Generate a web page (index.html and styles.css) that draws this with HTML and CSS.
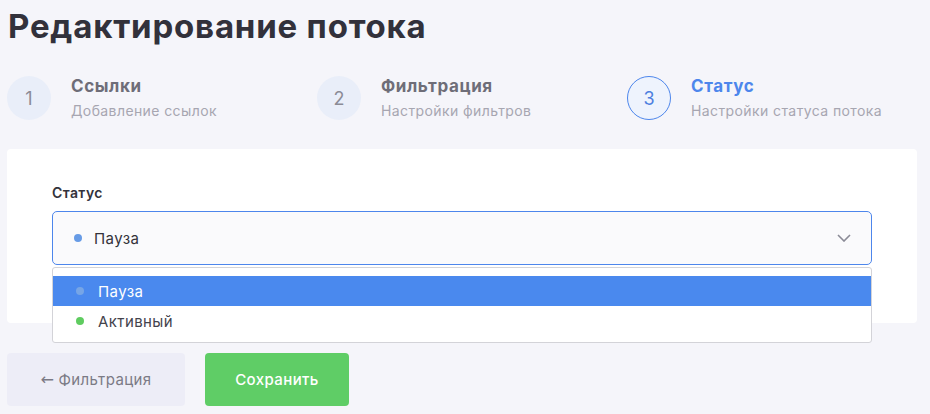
FILE: index.html
```html
<!DOCTYPE html>
<html lang="ru">

<head>
  <meta charset="utf-8">
  <meta name="viewport" content="width=device-width, initial-scale=1.0">
  <title>Редактирование потока</title>
  <link rel="stylesheet" href="styles.css">
</head>

<body>
  <div class="page">
    <h1 class="title">Редактирование потока</h1>

    <ul class="steps">
      <li class="step">
        <span class="num">1</span>
        <div class="step-text">
          <div class="step-name">Ссылки</div>
          <div class="step-desc">Добавление ссылок</div>
        </div>
      </li>
      <li class="step">
        <span class="num">2</span>
        <div class="step-text">
          <div class="step-name">Фильтрация</div>
          <div class="step-desc">Настройки фильтров</div>
        </div>
      </li>
      <li class="step active">
        <span class="num">3</span>
        <div class="step-text">
          <div class="step-name">Статус</div>
          <div class="step-desc">Настройки статуса потока</div>
        </div>
      </li>
    </ul>

    <div class="card">
      <div class="label">Статус</div>
      <div class="select">
        <div class="select-box">
          <span class="dot blue"></span>
          <span class="value">Пауза</span>
          <svg class="chevron" width="14" height="8" viewBox="0 0 14 8">
            <path d="M1 1l6 6 6-6" fill="none" stroke="#8a8a96" stroke-width="1.6" />
          </svg>
        </div>
        <ul class="options">
          <li class="option selected"><span class="dot blue"></span>Пауза</li>
          <li class="option"><span class="dot green"></span>Активный</li>
        </ul>
      </div>
    </div>

    <div class="actions">
      <button class="btn btn-back"><span class="arrow">←</span> Фильтрация</button>
      <button class="btn btn-save">Сохранить</button>
    </div>
  </div>
</body>

</html>
```

FILE: styles.css
```css
body, div, ul, li, h1 {
  margin: 0;
  padding: 0;
}

ul {
  list-style: none;
}

body {
  background: #f5f5fa;
  font-family: Inter, "Open Sans", sans-serif;
  color: #33323a;
  letter-spacing: 0.4px;
}

.page {
  padding: 0 13px 0 7px;
}

.title {
  font-size: 33px;
  line-height: 38px;
  font-weight: 700;
  color: #32313b;
  padding: 7px 0 0 1px;
  letter-spacing: 0.8px;
}

.steps {
  display: grid;
  grid-template-columns: repeat(3, 310px);
  margin-top: 30px;
}

.step {
  display: flex;
  align-items: center;
  gap: 20px;
}

.num {
  width: 44px;
  height: 44px;
  border-radius: 50%;
  background: #e9eef9;
  color: #8b8b96;
  font-size: 18px;
  letter-spacing: 0;
  display: flex;
  align-items: center;
  justify-content: center;
  box-sizing: border-box;
}

.step.active .num {
  border: 1px solid #4d86ec;
  background: #eef3fd;
  color: #4d7fe0;
}

.step-name {
  font-size: 17px;
  line-height: 22px;
  font-weight: 700;
  color: #6e6d78;
  letter-spacing: 0.6px;
}

.step.active .step-name {
  color: #4d86ec;
}

.step-desc {
  font-size: 14px;
  line-height: 20px;
  margin-top: 4px;
  color: #a7a6b1;
}

.card {
  margin-top: 28px;
  background: #fff;
  border-radius: 4px;
  padding: 35px 45px 58px;
}

.label {
  font-size: 14px;
  font-weight: 600;
  line-height: 18px;
  color: #33323a;
}

.select {
  position: relative;
  margin-top: 9px;
}

.select-box {
  height: 54px;
  box-sizing: border-box;
  border: 1px solid #4d86ec;
  border-radius: 5px;
  background: #fafafc;
  display: flex;
  align-items: center;
  padding: 0 20px 0 21px;
  font-size: 15px;
  color: #33323a;
}

.value {
  flex: 1;
  margin-left: 12px;
}

.dot {
  display: inline-block;
  width: 8px;
  height: 8px;
  border-radius: 50%;
}

.dot.blue {
  background: #679be6;
}

.dot.green {
  background: #5fcc60;
}

.options {
  position: absolute;
  left: 0;
  right: 0;
  top: 56px;
  background: #fff;
  border: 1px solid #d3d3d8;
  border-radius: 3px;
  padding: 8px 0 6px;
}

.option {
  height: 30px;
  display: flex;
  align-items: center;
  padding-left: 23px;
  gap: 14px;
  font-size: 15px;
  color: #44434c;
}

.option.selected {
  background: #4a89ee;
  color: #fff;
}

.option.selected .dot {
  background: #76a5e6;
}

.actions {
  display: flex;
  gap: 20px;
  margin-top: 30px;
}

.btn {
  height: 53px;
  border: 0;
  border-radius: 4px;
  font-family: inherit;
  font-size: 15px;
  letter-spacing: 0.4px;
  cursor: pointer;
}

.btn-back {
  width: 178px;
  background: #ededf7;
  color: #7b7a85;
}

.arrow {
  font-family: "DejaVu Sans", sans-serif;
  font-size: 16px;
  letter-spacing: 0;
}

.btn-save {
  width: 144px;
  background: #5fcd66;
  color: #fff;
  font-weight: 500;
}
```
